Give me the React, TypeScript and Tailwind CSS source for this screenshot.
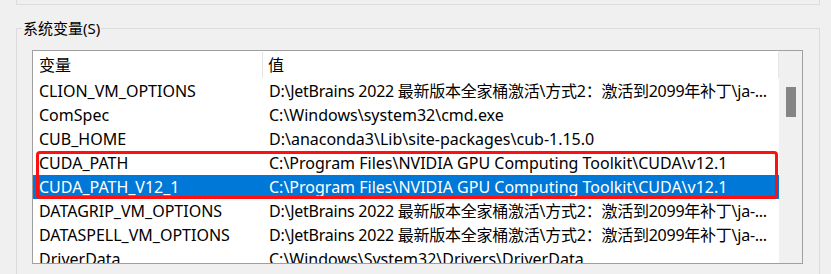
import React from "react";

const JB = "D:\\JetBrains 2022 最新版本全家桶激活\\方式2：激活到2099年补丁\\ja-...";

const rows: { name: string; value: string; selected?: boolean; tight?: boolean }[] = [
  { name: "CLION_VM_OPTIONS", value: JB, tight: true },
  { name: "ComSpec", value: "C:\\Windows\\system32\\cmd.exe" },
  { name: "CUB_HOME", value: "D:\\anaconda3\\Lib\\site-packages\\cub-1.15.0" },
  { name: "CUDA_PATH", value: "C:\\Program Files\\NVIDIA GPU Computing Toolkit\\CUDA\\v12.1" },
  { name: "CUDA_PATH_V12_1", value: "C:\\Program Files\\NVIDIA GPU Computing Toolkit\\CUDA\\v12.1", selected: true },
  { name: "DATAGRIP_VM_OPTIONS", value: JB, tight: true },
  { name: "DATASPELL_VM_OPTIONS", value: JB, tight: true },
  { name: "DriverData", value: "C:\\Windows\\System32\\Drivers\\DriverData" },
];

export default function App() {
  return (
    <div className="relative w-[831px] h-[274px] overflow-hidden bg-[#f0f0f0] font-['Noto_Sans','Noto_Sans_CJK_SC',sans-serif] text-[16px] text-black">
      {/* previous group box bottom edge */}
      <div className="ml-[16px] w-[804px] h-[5px] border-x border-b border-[#dcdcdc]" />

      {/* system variables group box */}
      <div className="relative ml-[16px] mt-[23px] w-[804px] h-[260px] border-x border-t border-[#dcdcdc]">
        <div className="absolute left-[5px] top-[-14px] px-[1px] bg-[#f0f0f0] leading-[26px] text-[15px]">系统变量(S)</div>

        {/* list view */}
        <div className="ml-[15px] mt-[21px] w-[771px] h-[214px] border border-[#a0a0a0] bg-white flex overflow-hidden">
          <div className="w-[746px] flex flex-col">
            {/* header */}
            <div className="flex h-[28px] shrink-0 items-center">
              <div className="w-[230px] h-[26px] pl-[6px] flex items-center border-r border-[#e5e5e5]">变量</div>
              <div className="flex-1 h-[26px] pl-[5px] flex items-center border-r border-[#e5e5e5]">值</div>
            </div>
            {rows.map((r) => (
              <div
                key={r.name}
                className={
                  "flex h-[24px] shrink-0 items-center whitespace-nowrap leading-[24px] " +
                  (r.selected ? "bg-[#0078d7] text-white" : "")
                }
              >
                <div className="w-[230px] pl-[6px] overflow-hidden">{r.name}</div>
                <div className={"flex-1 pl-[6px] overflow-hidden " + (r.tight ? "tracking-[-0.25px]" : "")}>{r.value}</div>
              </div>
            ))}
          </div>
          {/* scrollbar */}
          <div className="w-[23px] bg-[#f0f0f0] pt-[36px] pl-[7px]">
            <div className="w-[10px] h-[30px] bg-[#858585]" />
          </div>
        </div>
      </div>

      {/* red highlight annotation */}
      <div className="absolute left-[36px] top-[151px] w-[742px] h-[48px] border-[3px] border-[#ff1010] rounded-[4px]" />
    </div>
  );
}
